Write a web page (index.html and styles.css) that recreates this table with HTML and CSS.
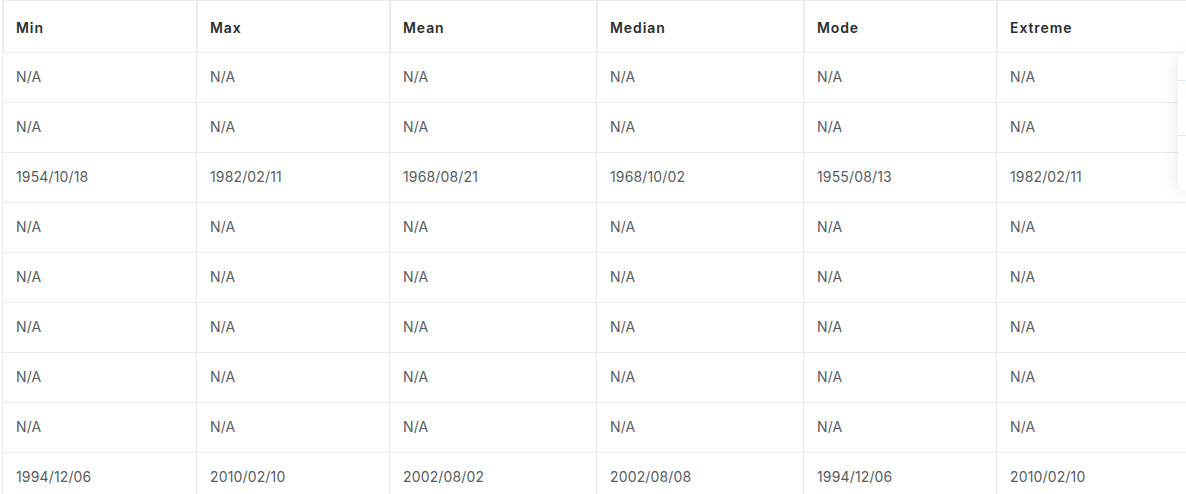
FILE: index.html
```html
<!DOCTYPE html>
<html>
<head>
<meta charset="utf-8">
<link rel="stylesheet" href="styles.css">
</head>
<body>
<div class="wrap">
  <table class="grid">
    <colgroup>
      <col class="c1"><col class="c2"><col class="c3"><col class="c4"><col class="c5"><col class="c6">
    </colgroup>
    <thead>
      <tr><th>Min</th><th>Max</th><th>Mean</th><th>Median</th><th>Mode</th><th>Extreme</th></tr>
    </thead>
    <tbody>
      <tr><td>N/A</td><td>N/A</td><td>N/A</td><td>N/A</td><td>N/A</td><td>N/A</td></tr>
      <tr><td>N/A</td><td>N/A</td><td>N/A</td><td>N/A</td><td>N/A</td><td>N/A</td></tr>
      <tr><td>1954/10/18</td><td>1982/02/11</td><td>1968/08/21</td><td>1968/10/02</td><td>1955/08/13</td><td>1982/02/11</td></tr>
      <tr><td>N/A</td><td>N/A</td><td>N/A</td><td>N/A</td><td>N/A</td><td>N/A</td></tr>
      <tr><td>N/A</td><td>N/A</td><td>N/A</td><td>N/A</td><td>N/A</td><td>N/A</td></tr>
      <tr><td>N/A</td><td>N/A</td><td>N/A</td><td>N/A</td><td>N/A</td><td>N/A</td></tr>
      <tr><td>N/A</td><td>N/A</td><td>N/A</td><td>N/A</td><td>N/A</td><td>N/A</td></tr>
      <tr><td>N/A</td><td>N/A</td><td>N/A</td><td>N/A</td><td>N/A</td><td>N/A</td></tr>
      <tr><td>1994/12/06</td><td>2010/02/10</td><td>2002/08/02</td><td>2002/08/08</td><td>1994/12/06</td><td>2010/02/10</td></tr>
    </tbody>
  </table>
  <div class="side-card">
    <div class="side-line l1"></div>
    <div class="side-line l2"></div>
  </div>
</div>
</body>
</html>
```
FILE: styles.css
```css
html, body {
  margin: 0;
  padding: 0;
  background: #ffffff;
}
body {
  font-family: Inter, "Open Sans", sans-serif;
  overflow: hidden;
  width: 1186px;
  height: 494px;
}
.wrap {
  position: relative;
  width: 1186px;
  height: 494px;
  overflow: hidden;
  padding-left: 2px;
  box-sizing: border-box;
}
.grid {
  border-collapse: separate;
  border-spacing: 0;
  table-layout: fixed;
  width: 1200px;
  border-top: 1px solid #e6ecef;
}
.c1 { width: 194px; }
.c2 { width: 193px; }
.c3 { width: 207px; }
.c4 { width: 207px; }
.c5 { width: 193px; }
.c6 { width: 206px; }
.grid th {
  height: 52px;
  box-sizing: border-box;
  text-align: left;
  font-size: 14px;
  font-weight: 600;
  color: #2b2d31;
  letter-spacing: 0.9px;
  padding: 1px 0 0 12px;
  border-left: 2px solid #e6ecef;
  border-bottom: 1px solid #e6ecef;
  vertical-align: middle;
}
.grid td {
  height: 50px;
  box-sizing: border-box;
  font-size: 14px;
  font-weight: 400;
  letter-spacing: 0.15px;
  color: #585c62;
  padding: 0 0 2px 13px;
  border-left: 1px solid #e6ecef;
  border-bottom: 1px solid #e6ecef;
  vertical-align: middle;
}
.side-card {
  position: absolute;
  left: 1178px;
  top: 52px;
  width: 40px;
  height: 138px;
  background: #ffffff;
  border-radius: 8px;
  box-shadow: -4px 2px 16px rgba(0, 0, 0, 0.07);
}
.side-line {
  position: absolute;
  left: 0;
  right: 0;
  height: 1px;
  background: #dde9f4;
}
.l1 { top: 28px; }
.l2 { top: 83px; }
```
